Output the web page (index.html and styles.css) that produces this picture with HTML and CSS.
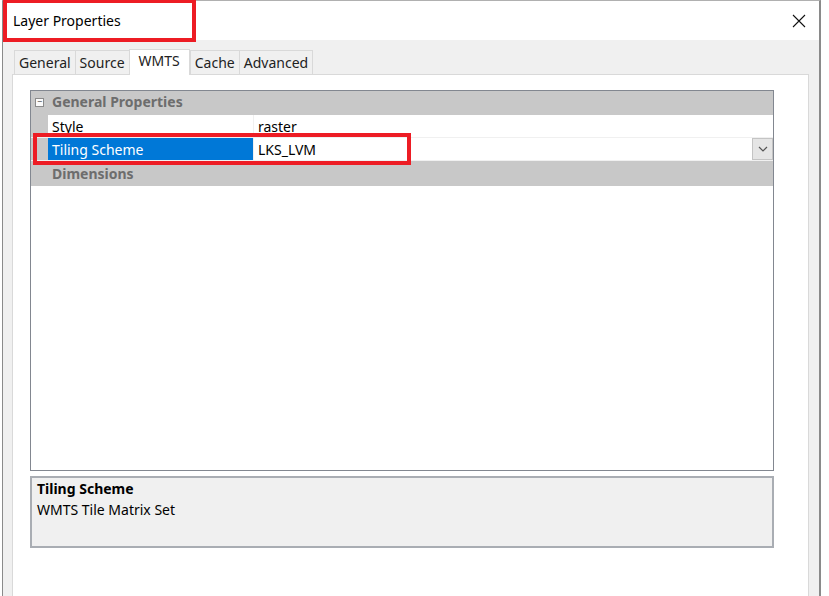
FILE: index.html
```html
<!DOCTYPE html>
<html lang="en">
<head>
  <meta charset="UTF-8">
  <title>Layer Properties</title>
  <link rel="stylesheet" href="styles.css">
</head>
<body>
  <div class="window">
    <!-- title bar -->
    <div class="titlebar">
      <span class="title">Layer Properties</span>
      <svg class="close" width="14" height="14" viewBox="0 0 14 14">
        <path d="M1 1 L13 13 M13 1 L1 13" stroke="#111" stroke-width="1.1" fill="none"/>
      </svg>
      <div class="mark mark-title"></div>
    </div>

    <div class="content">
      <div class="tabs">
        <div class="tab">General</div>
        <div class="tab">Source</div>
        <div class="tab active">WMTS</div>
        <div class="tab">Cache</div>
        <div class="tab">Advanced</div>
      </div>

      <div class="panel">
        <div class="grid">
          <div class="category">
            <span class="toggle">&minus;</span>
            <span>General Properties</span>
          </div>
          <div class="row">
            <div class="margin"></div>
            <div class="name">Style</div>
            <div class="value">raster</div>
          </div>
          <div class="row selected">
            <div class="margin"></div>
            <div class="name">Tiling Scheme</div>
            <div class="value">
              <span>LKS_LVM</span>
              <div class="dropdown">
                <svg width="10" height="6" viewBox="0 0 10 6">
                  <path d="M1 1 L5 5 L9 1" stroke="#555" stroke-width="1.2" fill="none"/>
                </svg>
              </div>
            </div>
            <div class="mark mark-row"></div>
          </div>
          <div class="category collapsed">
            <span class="toggle blank"></span>
            <span>Dimensions</span>
          </div>
        </div>

        <div class="help">
          <div class="help-title">Tiling Scheme</div>
          <div class="help-text">WMTS Tile Matrix Set</div>
        </div>
      </div>
    </div>
  </div>
</body>
</html>
```

FILE: styles.css
```css
* {
  box-sizing: border-box;
}
body {
  margin: 0;
  background: #fff;
  font-family: "Noto Sans", "Open Sans", sans-serif;
  font-size: 14px;
  color: #000;
  overflow: hidden;
}
.window {
  width: 819px;
  height: 596px;
  margin-left: 2px;
  border-left: 1px solid #8a8a8a;
  border-right: 2px solid #8a8a8a;
  border-top: 1px solid #b0b0b0;
  display: flex;
  flex-direction: column;
}

/* title bar */
.titlebar {
  position: relative;
  height: 39px;
  flex: none;
  background: #fff;
  display: flex;
  align-items: center;
  justify-content: space-between;
  padding: 0 12px 0 10px;
}
.title {
  font-size: 14px;
  color: #000;
}
.close {
  margin-right: 1px;
}

/* red annotation boxes */
.mark {
  position: absolute;
  border: 4px solid #ed1c24;
  pointer-events: none;
}
.mark-title {
  left: 0;
  top: -2px;
  width: 193px;
  height: 43px;
}
.mark-row {
  left: 2px;
  top: -5px;
  width: 378px;
  height: 32px;
}

/* body */
.content {
  flex: 1;
  background: #f0f0f0;
  padding: 9px 10px 0 9px;
  display: flex;
  flex-direction: column;
}
.tabs {
  display: flex;
  align-items: flex-end;
  height: 25px;
  padding-left: 2px;
  position: relative;
  z-index: 1;
}
.tab {
  height: 24px;
  padding: 1px 4px 0;
  border: 1px solid #d9d9d9;
  border-bottom: none;
  margin-right: -1px;
  background: #f0f0f0;
  color: #222;
  font-size: 14px;
  line-height: 22px;
}
.tab.active {
  height: 26px;
  margin: 0 0 -1px 0;
  padding: 0 9px;
  background: #fff;
  line-height: 22px;
  position: relative;
}
.tab.active + .tab {
  margin-left: 0;
}
.panel {
  flex: 1;
  background: #fff;
  border: 1px solid #d9d9d9;
  border-bottom: none;
  padding: 15px 34px 0 17px;
  display: flex;
  flex-direction: column;
}

/* property grid */
.grid {
  height: 381px;
  border: 1px solid #828790;
  background: #fff;
}
.category {
  height: 24px;
  background: #c8c8c8;
  color: #6d6d6d;
  font-weight: bold;
  display: flex;
  align-items: center;
  gap: 8px;
  padding-left: 4px;
  padding-bottom: 3px;
}
.category.collapsed {
  height: 25px;
  padding-bottom: 0;
}
.toggle {
  width: 9px;
  height: 9px;
  margin-top: 2px;
  border: 1px solid #8a8a8a;
  background: #fafafa;
  color: #444;
  font-size: 9px;
  line-height: 6px;
  text-align: center;
  font-weight: normal;
}
.toggle.blank {
  border-color: transparent;
  background: none;
}
.row {
  position: relative;
  height: 23px;
  display: flex;
  border-bottom: 1px solid #f0f0f0;
}
.row .margin {
  width: 17px;
  background: #c8c8c8;
  flex: none;
}
.row .name {
  width: 206px;
  flex: none;
  padding: 1px 0 0 4px;
  line-height: 21px;
  border-right: 1px solid #f0f0f0;
}
.row .value {
  flex: 1;
  padding: 1px 0 0 4px;
  line-height: 21px;
  display: flex;
  justify-content: space-between;
}
.row.selected .name {
  background: #0078d7;
  color: #fff;
}
.row.selected .value {
  padding-top: 0;
}
.row.selected .value span {
  padding-top: 1px;
}
.dropdown {
  width: 21px;
  height: 22px;
  background: #e5e5e5;
  border: 1px solid #c4c4c4;
  display: flex;
  align-items: center;
  justify-content: center;
}

/* description area */
.help {
  margin-top: 5px;
  height: 72px;
  background: #f0f0f0;
  border: 2px solid #a9adb3;
  padding: 0 5px;
}
.help-title {
  font-weight: bold;
  line-height: 21px;
}
.help-text {
  line-height: 21px;
}
```
